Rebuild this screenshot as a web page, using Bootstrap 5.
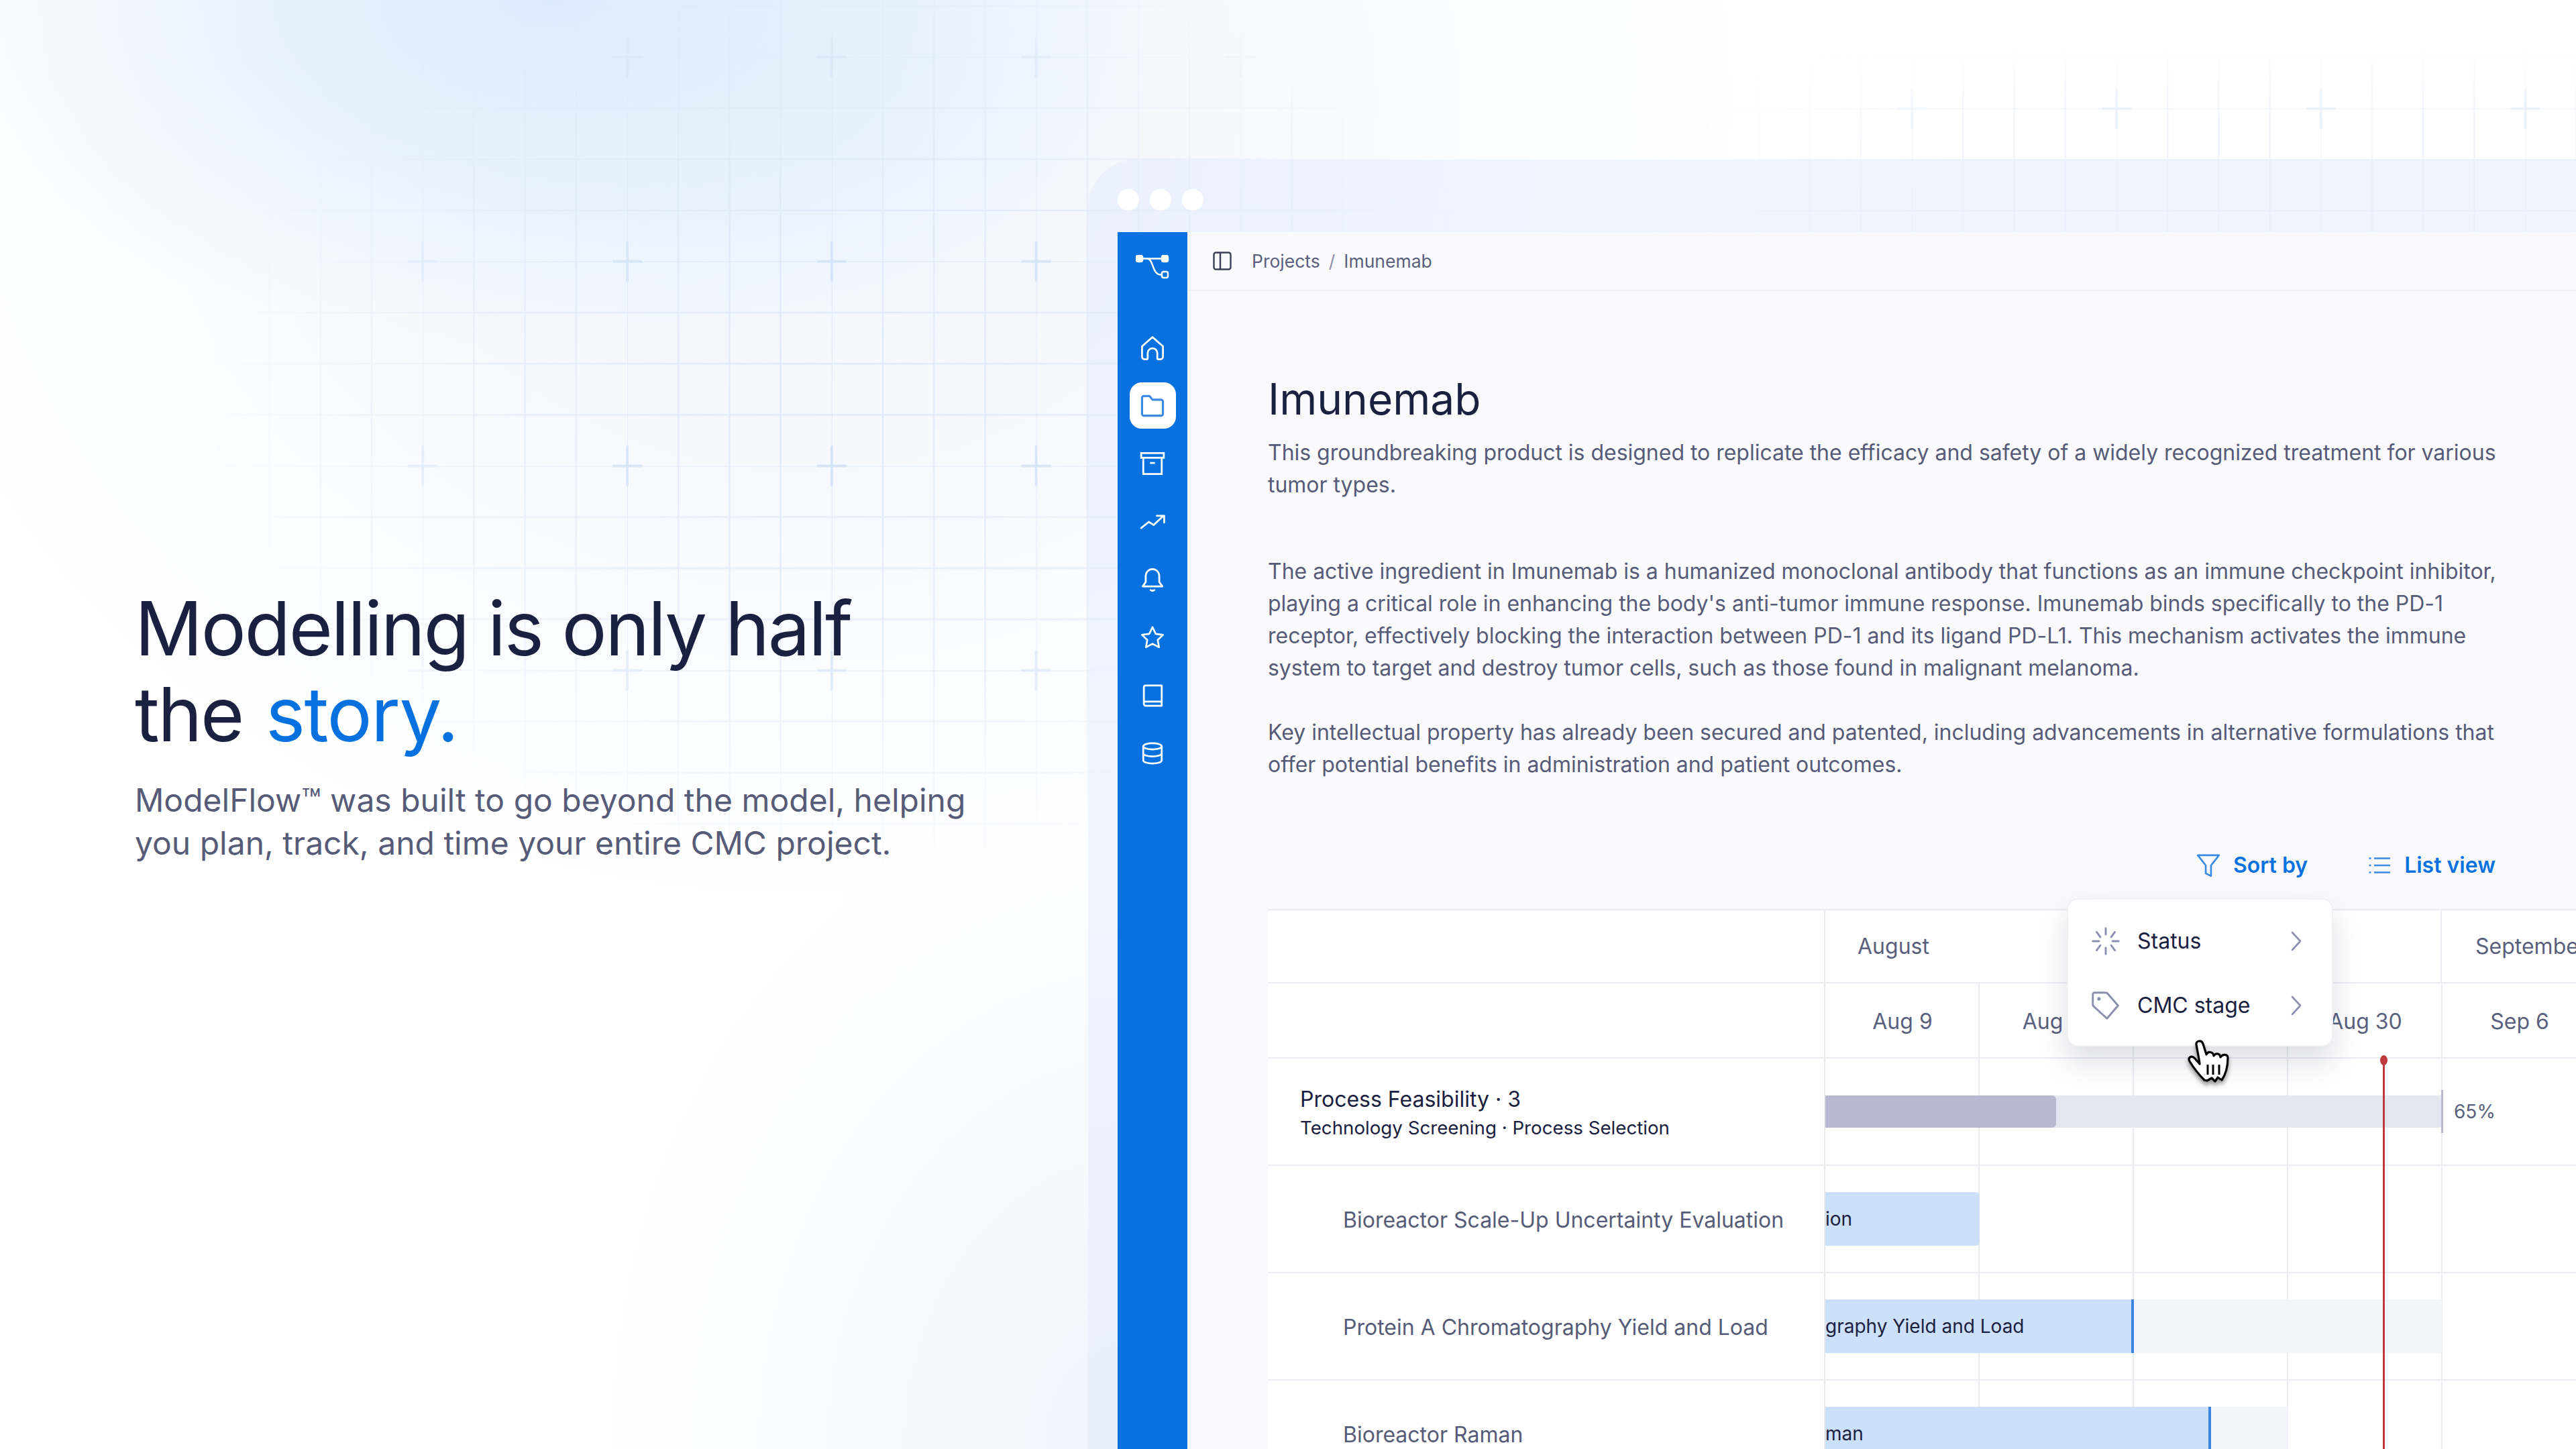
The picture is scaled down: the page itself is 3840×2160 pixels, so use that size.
<!DOCTYPE html>
<html lang="en">
<head>
  <meta charset="UTF-8">
  <title>ModelFlow</title>
  <meta name="viewport" content="width=device-width, initial-scale=1">
  <link href="https://cdn.jsdelivr.net/npm/bootstrap@5.3.3/dist/css/bootstrap.min.css" rel="stylesheet">
  <style>
    body {
      font-family: Inter, "Liberation Sans", sans-serif;
      width: 3840px; height: 2160px; overflow: hidden; position: relative;
      color: #1a2040;
      background:
        radial-gradient(ellipse 950px 520px at 820px 0, #dcebfc 0%, rgba(220,235,252,0) 100%),
        radial-gradient(ellipse 1400px 1200px at 1200px 150px, #eef5fd 0%, rgba(238,245,253,0) 100%),
        radial-gradient(ellipse 800px 1000px at 1700px 2160px, #eff4fd 0%, rgba(239,244,253,0) 100%),
        #fff;
    }
    .bg-lines { position: absolute; inset: 0; width: 3840px; height: 2160px; }

    /* left hero */
    .hero { flex: 0 0 1622px; padding-left: 201px; position: relative; }
    .hero-title { font-size: 112px; line-height: 128px; font-weight: 400; letter-spacing: -2.4px; margin-bottom: 33px; }
    .hero-title span { color: #0771e0; letter-spacing: -1.6px; margin-left: 5px; }
    .hero-sub { font-size: 48px; line-height: 64px; color: #565b78; margin: 0; }

    /* window */
    .win { flex: 1 1 0; min-width: 0; margin-top: 238px; padding-left: 44px; background: rgba(226,235,251,.5); border-top-left-radius: 72px; position: relative; }
    .win-bar { height: 108px; padding-top: 12px; gap: 16px; }
    .win-dot { width: 32px; height: 32px; border-radius: 50%; background: #fff; }
    .app-body { height: 1814px; }

    /* sidebar */
    .side { flex: 0 0 104px; background: #0771e0; color: #fff; }
    .side-logo { height: 138px; padding-top: 34px; }
    .side-btn { width: 69px; height: 69px; border-radius: 18px; margin-bottom: 17.4px; color: #fff; }
    .side-btn svg { width: 44px; height: 44px; }
    .side-btn.is-on { background: #fff; color: #3b8ae6; }

    /* main */
    .pane { flex: 1 1 0; min-width: 0; background: #fafafd; overflow: hidden; }
    .pane-head { height: 88px; padding-left: 38px; gap: 30px; border-bottom: 2px solid #eeeef4; }
    .pane-head .breadcrumb { font-size: 26.5px; margin: 2px 0 0; --bs-breadcrumb-divider-color: #8d90a8; --bs-breadcrumb-item-padding-x: 13px; }
    .pane-head .breadcrumb-item, .pane-head .breadcrumb-item.active { color: #5a5f7d; }
    .pane-body { padding: 122px 116px 0 120px; }
    .page-title { font-size: 64px; line-height: 77px; font-weight: 400; margin-bottom: 18px; }
    .page-text { font-size: 32px; line-height: 48px; color: #565b78; letter-spacing: -.02px; margin: 0 0 48px; }
    .page-text.is-lead { margin-bottom: 81px; }
    .page-text.is-last { margin-bottom: 0; }
    .tools { height: 48px; margin-top: 102px; margin-bottom: 41px; margin-right: 4px; gap: 90px; }
    .tool-link { font-size: 32px; font-weight: 600; color: #0771e0; text-decoration: none; gap: 18px; }

    /* gantt */
    .gantt { margin-right: -116px; position: relative; background: #fff; border-top: 2px solid #ebebf2; }
    .g-row { border-bottom: 2px solid #ebebf2; }
    .g-label { flex: 0 0 831px; padding-top: 3px; }
    .g-time { flex: 1 1 0; min-width: 0; border-left: 2px solid #e8e8f1; margin-left: -2px; overflow: hidden; }
    .g-lines { background-image: repeating-linear-gradient(90deg, transparent 0, transparent 228px, #ebebf2 228px, #ebebf2 230px); }
    .g-month { height: 109px; }
    .g-week { height: 112px; }
    .g-tall { height: 160px; }
    .month-cell { flex: 0 0 919px; padding-left: 48px; font-size: 32px; color: #5a5f7d; border-right: 2px solid #ebebf2; white-space: nowrap; }
    .month-cell.is-next { flex: 1 0 auto; border: 0; padding-left: 50px; }
    .week-cell { flex: 0 0 230px; padding-top: 3px; text-align: center; font-size: 32px; color: #5a5f7d; white-space: nowrap; }
    .g-group-name { font-size: 32px; line-height: 44px; padding-left: 48px; }
    .g-group-sub { font-size: 27.7px; line-height: 40px; padding-left: 48px; }
    .g-task { font-size: 32px; color: #565b78; padding-left: 112px; }

    .track { height: 48px; flex: 0 0 919px; background: #e5e6f0; position: relative; }
    .track-fill { background: #b6b9d0; border-radius: 0 6px 6px 0; }
    .track-end { position: absolute; right: -2px; top: -8px; bottom: -8px; width: 3px; background: #b6b9d0; }
    .track-pct { font-size: 28px; color: #5a5f7d; margin-left: 18px; }
    .task-bar { height: 80px; }
    .task-done { background: #cce1f9; font-size: 28px; color: #1a2040; white-space: nowrap; overflow: hidden; }
    .task-done.is-end { border-radius: 0 6px 6px 0; }
    .task-done.is-part { border-right: 4px solid #3a86e0; }
    .task-rest { background: #f2f6fc; }

    .now-line { position: absolute; left: 1662px; top: 222px; bottom: 0; width: 3px; background: #c0393f; }
    .now-line::before { content: ""; position: absolute; left: -4px; top: -6px; width: 11px; height: 15px; border-radius: 50%; background: #c0393f; }

    .sort-menu { position: absolute; left: 1191px; top: -18px; width: 397px; height: 221px; padding: 14px 0 0; border: 2px solid #f0f0f5; border-radius: 16px; box-shadow: 0 24px 44px rgba(30,32,70,.14); display: block; }
    .sort-menu .dropdown-item { height: 96px; padding: 0 44px 0 34px; font-size: 32px; color: #1a2040; gap: 25px; }
    .cursor-hand { position: absolute; z-index: 1001; left: 1350px; top: 175px; width: 100px; height: 100px; filter: drop-shadow(0 5px 3px rgba(0,0,0,.4)); }
  </style>
</head>
<body class="d-flex">

  <!-- grid behind everything -->
  <svg class="bg-lines" viewBox="0 0 3840 2160" aria-hidden="true">
    <defs>
      <pattern id="tile-a" width="304.8" height="304.8" patternUnits="userSpaceOnUse" patternTransform="translate(935 85)">
        <path d="M0 0V304.8M76.2 0V304.8M152.4 0V304.8M228.6 0V304.8M0 0H304.8M0 76.2H304.8M0 152.4H304.8M0 228.6H304.8" stroke="#dce8f8" stroke-width="2" fill="none"/>
        <path d="M0 0H22M0 0V30M304.8 0H282.8M304.8 0V30M0 304.8H22M0 304.8V274.8M304.8 304.8H282.8M304.8 304.8V274.8" stroke="#cfe0f6" stroke-width="3.5" fill="none"/>
      </pattern>
      <pattern id="tile-b" width="304.8" height="304.8" patternUnits="userSpaceOnUse" patternTransform="translate(3155 162)">
        <path d="M0 0V304.8M76.2 0V304.8M152.4 0V304.8M228.6 0V304.8M0 0H304.8M0 76.2H304.8M0 152.4H304.8M0 228.6H304.8" stroke="#e6edf9" stroke-width="2" fill="none"/>
        <path d="M0 0H22M0 0V30M304.8 0H282.8M304.8 0V30M0 304.8H22M0 304.8V274.8M304.8 304.8H282.8M304.8 304.8V274.8" stroke="#e0e9f8" stroke-width="3.5" fill="none"/>
      </pattern>
      <radialGradient id="fade-a" gradientUnits="userSpaceOnUse" cx="0" cy="0" r="1" gradientTransform="translate(1280 600) scale(980 720)">
        <stop offset="0" stop-color="#fff"/>
        <stop offset=".5" stop-color="#fff" stop-opacity=".75"/>
        <stop offset="1" stop-color="#fff" stop-opacity="0"/>
      </radialGradient>
      <linearGradient id="fade-b" gradientUnits="userSpaceOnUse" x1="2640" y1="60" x2="2860" y2="300">
        <stop offset="0" stop-color="#fff" stop-opacity="0"/>
        <stop offset="1" stop-color="#fff" stop-opacity=".7"/>
      </linearGradient>
      <linearGradient id="fade-c" gradientUnits="userSpaceOnUse" x1="0" y1="70" x2="0" y2="170">
        <stop offset="0" stop-color="#fff" stop-opacity="0"/>
        <stop offset="1" stop-color="#fff"/>
      </linearGradient>
      <mask id="mask-c"><rect x="2400" y="0" width="1440" height="346" fill="url(#fade-c)"/></mask>
      <mask id="mask-a"><rect width="3840" height="2160" fill="url(#fade-a)"/></mask>
      <mask id="mask-b"><rect x="2400" y="0" width="1440" height="346" fill="url(#fade-b)"/></mask>
    </defs>
    <rect width="2600" height="1800" fill="url(#tile-a)" mask="url(#mask-a)"/>
    <g mask="url(#mask-c)">
      <rect x="2400" y="60" width="1440" height="286" fill="url(#tile-b)" mask="url(#mask-b)"/>
    </g>
  </svg>

  <section class="hero d-flex flex-column justify-content-center">
    <h1 class="hero-title">Modelling is only half<br>the <span>story.</span></h1>
    <p class="hero-sub">ModelFlow™ was built to go beyond the model, helping<br>you plan, track, and time your entire CMC project.</p>
  </section>

  <section class="win">
    <div class="win-bar d-flex align-items-center">
      <div class="win-dot"></div><div class="win-dot"></div><div class="win-dot"></div>
    </div>

    <div class="app-body d-flex">
      <!-- sidebar -->
      <nav class="side d-flex flex-column align-items-center">
        <div class="side-logo">
          <svg width="50" height="36" viewBox="0 0 50 36" fill="none" stroke="#fff" stroke-width="2.5" stroke-linecap="round">
            <rect x="1" y="1" width="9" height="9" rx="2.5" fill="#fff"/>
            <rect x="39" y="1" width="9" height="9" rx="2.5" fill="#fff"/>
            <path d="M10 5.5H39M17 5.5C27 6 24 30 38 29.5"/>
            <rect x="39" y="25" width="9" height="9" rx="2.5"/>
          </svg>
        </div>
        <a class="side-btn d-flex align-items-center justify-content-center">
          <svg viewBox="0 0 24 24" fill="none" stroke="currentColor" stroke-width="1.5" stroke-linejoin="round"><path d="M3.500 10.500 12 3l8.500 7.500V19a2 2 0 0 1-2 2h-1.600a1 1 0 0 1-1-1v-4a3.900 3.900 0 0 0-7.800 0v4a1 1 0 0 1-1 1H5.500a2 2 0 0 1-2-2Z"/></svg>
        </a>
        <a class="side-btn is-on d-flex align-items-center justify-content-center">
          <svg viewBox="0 0 24 24" fill="none" stroke="currentColor" stroke-width="1.7" stroke-linejoin="round"><path d="M3.500 5.500A1.500 1.500 0 0 1 5 4h4.500L12 7h7a1.500 1.500 0 0 1 1.500 1.500V18.500A1.500 1.500 0 0 1 19 20H5a1.500 1.500 0 0 1-1.500-1.500Z"/></svg>
        </a>
        <a class="side-btn d-flex align-items-center justify-content-center">
          <svg viewBox="0 0 24 24" fill="none" stroke="currentColor" stroke-width="1.5"><path d="M2.800 3.500h18.400v3.800H2.800ZM4.500 7.300V20.500h15V7.300M10 11.500h4"/></svg>
        </a>
        <a class="side-btn d-flex align-items-center justify-content-center">
          <svg viewBox="0 0 24 24" fill="none" stroke="currentColor" stroke-width="1.5" stroke-linecap="round" stroke-linejoin="round"><path d="M2.800 17 9 12l4 2.500L21 7M15.500 7h6v5.500"/></svg>
        </a>
        <a class="side-btn d-flex align-items-center justify-content-center">
          <svg viewBox="0 0 24 24" fill="none" stroke="currentColor" stroke-width="1.5" stroke-linecap="round" stroke-linejoin="round"><path d="M6.500 14V9a5.500 5.500 0 0 1 11 0V14l2.500 3.500H4ZM10.500 20.500q1.500 1 3 0"/></svg>
        </a>
        <a class="side-btn d-flex align-items-center justify-content-center">
          <svg viewBox="0 0 24 24" fill="none" stroke="currentColor" stroke-width="1.6" stroke-linejoin="round"><path transform="translate(12 12) scale(.9) translate(-12 -12)" d="m12 2.800 2.900 6.100 6.600.9-4.800 4.600 1.200 6.600-5.900-3.200-5.900 3.200 1.200-6.600L2.500 9.800l6.600-.9Z"/></svg>
        </a>
        <a class="side-btn d-flex align-items-center justify-content-center">
          <svg viewBox="0 0 24 24" fill="none" stroke="currentColor" stroke-width="1.5" stroke-linejoin="round"><path d="M5 5A1.500 1.500 0 0 1 6.500 3.800H19.500V20.200H6.500A1.500 1.500 0 0 1 5 18.700ZM5 16.800H19.500"/></svg>
        </a>
        <a class="side-btn d-flex align-items-center justify-content-center">
          <svg viewBox="0 0 24 24" fill="none" stroke="currentColor" stroke-width="1.5"><ellipse cx="12" cy="6.300" rx="7.500" ry="2.500"/><path d="M4.500 6.300V17.700c0 1.400 3.400 2.500 7.500 2.500s7.500-1.100 7.500-2.500V6.300M4.500 12c0 1.400 3.400 2.500 7.500 2.500s7.500-1.100 7.500-2.500"/></svg>
        </a>
      </nav>

      <!-- main pane -->
      <div class="pane">
        <header class="pane-head d-flex align-items-center">
          <svg width="28" height="28" viewBox="0 0 28 28" fill="none" stroke="#3a3f55" stroke-width="2.400"><rect x="1.500" y="1.500" width="25" height="25" rx="3"/><path d="M11 1.500v25"/></svg>
          <ol class="breadcrumb">
            <li class="breadcrumb-item">Projects</li>
            <li class="breadcrumb-item active">Imunemab</li>
          </ol>
        </header>

        <div class="pane-body">
          <h2 class="page-title">Imunemab</h2>
          <p class="page-text is-lead">This groundbreaking product is designed to replicate the efficacy and safety of a widely recognized treatment for various tumor types.</p>
          <p class="page-text">The active ingredient in Imunemab is a humanized monoclonal antibody that functions as an immune checkpoint inhibitor, playing a critical role in enhancing the body's anti-tumor immune response. Imunemab binds specifically to the PD-1 receptor, effectively blocking the interaction between PD-1 and its ligand PD-L1. This mechanism activates the immune system to target and destroy tumor cells, such as those found in malignant melanoma.</p>
          <p class="page-text is-last">Key intellectual property has already been secured and patented, including advancements in alternative formulations that offer potential benefits in administration and patient outcomes.</p>

          <div class="tools d-flex align-items-center justify-content-end">
            <a class="tool-link d-flex align-items-center">
              <svg width="38" height="38" viewBox="0 0 24 24" fill="none" stroke="#3b8ae6" stroke-width="1.700" stroke-linejoin="round"><path d="M2 2.500h20l-7.500 9.500v10l-5-2.500V12Z"/></svg>
              Sort by
            </a>
            <a class="tool-link d-flex align-items-center">
              <svg width="36" height="36" viewBox="0 0 24 24" fill="none" stroke="#3b8ae6" stroke-width="1.800"><path d="M6 5h16M6 12h16M6 19h16"/><path d="M1 5h2M1 12h2M1 19h2"/></svg>
              List view
            </a>
          </div>

          <div class="gantt">
            <div class="g-row g-month d-flex">
              <div class="g-label"></div>
              <div class="g-time d-flex align-items-center">
                <div class="month-cell h-100 d-flex align-items-center">August</div>
                <div class="month-cell is-next">September</div>
              </div>
            </div>
            <div class="g-row g-week d-flex">
              <div class="g-label"></div>
              <div class="g-time g-lines d-flex align-items-center">
                <div class="week-cell">Aug 9</div>
                <div class="week-cell">Aug 16</div>
                <div class="week-cell">Aug 23</div>
                <div class="week-cell">Aug 30</div>
                <div class="week-cell">Sep 6</div>
              </div>
            </div>

            <div class="g-row g-tall d-flex">
              <div class="g-label d-flex flex-column justify-content-center">
                <div class="g-group-name">Process Feasibility · 3</div>
                <div class="g-group-sub">Technology Screening · Process Selection</div>
              </div>
              <div class="g-time g-lines d-flex align-items-center">
                <div class="track d-flex">
                  <div class="track-fill" style="width: 344px"></div>
                  <div class="track-end"></div>
                </div>
                <div class="track-pct">65%</div>
              </div>
            </div>

            <div class="g-row g-tall d-flex">
              <div class="g-label g-task d-flex align-items-center">Bioreactor Scale-Up Uncertainty Evaluation</div>
              <div class="g-time g-lines d-flex align-items-center">
                <div class="task-bar d-flex">
                  <div class="task-done is-end d-flex align-items-center" style="width: 230px">ion</div>
                </div>
              </div>
            </div>

            <div class="g-row g-tall d-flex">
              <div class="g-label g-task d-flex align-items-center">Protein A Chromatography Yield and Load</div>
              <div class="g-time g-lines d-flex align-items-center">
                <div class="task-bar d-flex">
                  <div class="task-done is-part d-flex align-items-center" style="width: 460px">graphy Yield and Load</div>
                  <div class="task-rest" style="width: 459px"></div>
                </div>
              </div>
            </div>

            <div class="g-row g-tall d-flex">
              <div class="g-label g-task d-flex align-items-center">Bioreactor Raman</div>
              <div class="g-time g-lines d-flex align-items-center">
                <div class="task-bar d-flex">
                  <div class="task-done is-part d-flex align-items-center" style="width: 575px">man</div>
                  <div class="task-rest" style="width: 115px"></div>
                </div>
              </div>
            </div>

            <div class="now-line"></div>

            <div class="dropdown-menu sort-menu">
              <a class="dropdown-item d-flex align-items-center">
                <svg width="44" height="44" viewBox="0 0 24 24" fill="none" stroke="#8b8fb0" stroke-width="1.600" stroke-linecap="round"><path d="M12 1.500v5M12 17.500v5M1.500 12h5M17.500 12h5M4.600 4.600l3 4M16.400 15.400l3 4M4.600 19.400l3-4M16.400 8.600l3-4"/></svg>
                <span class="flex-grow-1">Status</span>
                <svg width="18" height="30" viewBox="0 0 18 30" fill="none" stroke="#8b8fb0" stroke-width="2.600" stroke-linecap="round" stroke-linejoin="round"><path d="m3 2 12 13L3 28"/></svg>
              </a>
              <a class="dropdown-item d-flex align-items-center">
                <svg width="44" height="44" viewBox="0 0 24 24" fill="none" stroke="#8b8fb0" stroke-width="1.600" stroke-linejoin="round"><path d="M1.500 3a1.500 1.500 0 0 1 1.500-1.500h9a2 2 0 0 1 1.600.8l8.400 9.700-9 10.500L2 12.500a2 2 0 0 1-.5-1.300Z"/><circle cx="6.500" cy="6.500" r=".6" fill="#8b8fb0"/></svg>
                <span class="flex-grow-1">CMC stage</span>
                <svg width="18" height="30" viewBox="0 0 18 30" fill="none" stroke="#8b8fb0" stroke-width="2.600" stroke-linecap="round" stroke-linejoin="round"><path d="m3 2 12 13L3 28"/></svg>
              </a>
            </div>

            <svg class="cursor-hand" viewBox="0 0 100 100">
              <path d="M46 78 C40 72 30 60 24 50 C21 45 26 41 31 45 L39 54 C38 44 35 32 34 25 C33 19 42 18 44 24 L49 40 C51 35 59 35 60 42 C63 37 69 38 70 44 C73 39 81 39 81 45 C81 55 80 66 72 78 L66 74 L62 80 L57 75 L50 79 Z" fill="#fff" stroke="#000" stroke-width="3.200" stroke-linejoin="round"/>
              <path d="M51 55V70M59 55V70M68 55V70" stroke="#000" stroke-width="3" fill="none"/>
            </svg>
          </div>
        </div>
      </div>
    </div>
  </section>

</body>
</html>
